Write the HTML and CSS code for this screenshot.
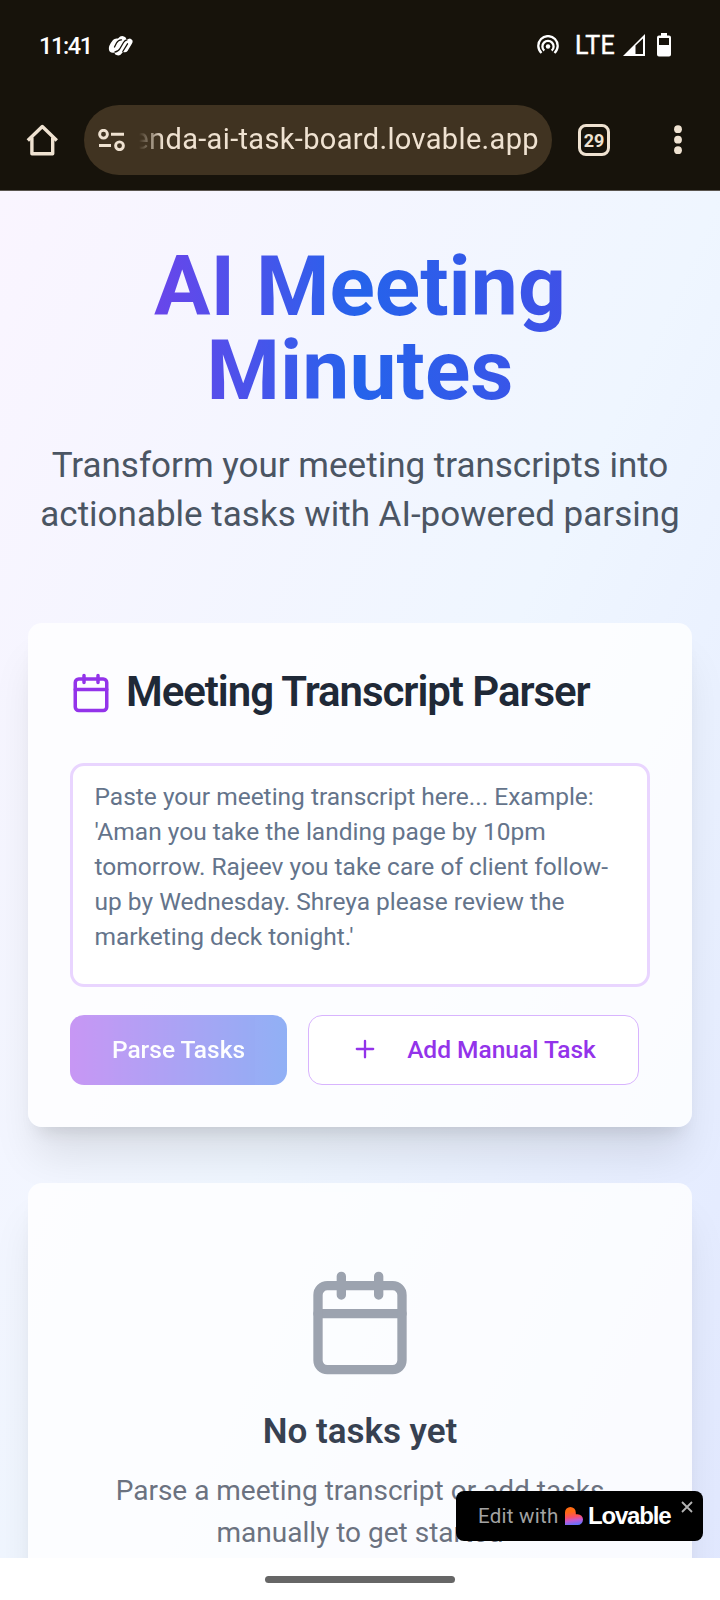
FILE: index.html
```html
<!DOCTYPE html>
<html lang="en">
<head>
<meta charset="utf-8">
<title>AI Meeting Minutes</title>
<link rel="stylesheet" href="styles.css">
</head>
<body>
<div class="phone">
  <header class="chrome">
    <div class="status">
      <span class="clock">11:41</span>
      <svg class="app-mark" width="26" height="22" viewBox="0 0 26 22">
        <path d="M5 5 Q6.500 3 10 3.500 Q13 0 16 1.500 Q18 2 18.500 4.500 L22 3.500 Q26 5 24 8.500 L19.500 16 Q18 18 15 17 Q12 21.500 8.500 20 Q6.500 19.500 6.500 17.500 Q2 18.500 1 15 Q0 11 5 5Z" fill="#fff"/>
        <path d="M13.500 4.800 Q10.500 4.500 8.500 8 L6.500 12 M7 17 Q10.500 16.500 12 13.500 L15.500 7.500 Q17 5 19 4.800 M14.800 16.500 L19.500 8.800" fill="none" stroke="#17130b" stroke-width="1.300" stroke-linecap="round"/>
      </svg>
      <span class="spacer"></span>
      <svg class="hotspot" width="24" height="20" viewBox="0 0 24 20" fill="none" stroke="#fff" stroke-width="2.300">
        <path d="M5.500 18 A9.700 9.700 0 1 1 18.500 18"/>
        <path d="M8.300 15.700 A5.600 5.600 0 1 1 15.700 15.700"/>
        <circle cx="12" cy="11.500" r="2.200" fill="#fff" stroke="none"/>
      </svg>
      <span class="network">LTE</span>
      <svg class="signal" width="22" height="22" viewBox="0 0 22 22">
        <path d="M0 22 L22 0 V22Z" fill="#fff"/><path d="M12.500 11.500 L20 4.500 V20 H12.500Z" fill="#17130b"/>
      </svg>
      <svg class="battery" width="14" height="24" viewBox="0 0 14 24">
        <path d="M4 0 H10 V2.500 H12 Q14 2.500 14 4.500 V21.500 Q14 23.500 12 23.500 H2 Q0 23.500 0 21.500 V4.500 Q0 2.500 2 2.500 H4Z" fill="#fff"/><path d="M2 5 H12 V12 H2Z" fill="#17130b"/>
      </svg>
    </div>
    <div class="toolbar">
      <svg class="home" width="32" height="32" viewBox="0 0 32 32" fill="none" stroke="#efe2d1" stroke-width="3.400" stroke-linejoin="round">
        <path d="M1.800 16.500 L16.300 2.500 L30.800 16.500"/><path d="M5.900 13.500 V29.800 H26.700 V13.500"/>
      </svg>
      <div class="omnibox">
        <svg class="tune" width="27" height="22" viewBox="0 0 27 22" fill="none" stroke="#efe2d1" stroke-width="2.900">
          <circle cx="5.500" cy="5.200" r="3.900"/><path d="M13 5.200 H26 M1 16.500 H13"/><circle cx="21.500" cy="16.800" r="3.900"/>
        </svg>
        <div class="url"><span>enda-ai-task-board.lovable.app</span></div>
      </div>
      <div class="tabs">29</div>
      <svg class="more" width="8" height="30" viewBox="0 0 8 30" fill="#efe2d1"><circle cx="4" cy="4.200" r="3.900"/><circle cx="4" cy="14.700" r="3.900"/><circle cx="4" cy="25.200" r="3.900"/></svg>
    </div>
  </header>

  <div class="viewport">
    <main class="page">
      <div class="hero">
        <h1>AI Meeting<br>Minutes</h1>
        <p>Transform your meeting transcripts into<br>actionable tasks with AI-powered parsing</p>
      </div>

      <section class="card parser">
        <h2>
          <svg width="42" height="42" viewBox="0 0 24 24" fill="none" stroke="currentColor" stroke-width="2" stroke-linecap="round" stroke-linejoin="round"><path d="M8 2v4M16 2v4M3 10h18"/><rect width="18" height="18" x="3" y="4" rx="2"/></svg>
          <span>Meeting Transcript Parser</span>
        </h2>
        <div class="transcript">Paste your meeting transcript here... Example:<br>'Aman you take the landing page by 10pm<br>tomorrow. Rajeev you take care of client follow-<br>up by Wednesday. Shreya please review the<br>marketing deck tonight.'</div>
        <div class="actions">
          <button class="btn primary">Parse Tasks</button>
          <button class="btn outline">
            <svg width="28" height="28" viewBox="0 0 24 24" fill="none" stroke="currentColor" stroke-width="2" stroke-linecap="round"><path d="M5 12h14M12 5v14"/></svg>
            Add Manual Task
          </button>
        </div>
      </section>

      <section class="card empty">
        <svg width="112" height="112" viewBox="0 0 24 24" fill="none" stroke="currentColor" stroke-width="2" stroke-linecap="round" stroke-linejoin="round"><path d="M8 2v4M16 2v4M3 10h18"/><rect width="18" height="18" x="3" y="4" rx="2"/></svg>
        <h3>No tasks yet</h3>
        <p>Parse a meeting transcript or add tasks<br>manually to get started</p>
      </section>
    </main>
    <aside class="badge">
      <span class="edit">Edit with</span>
      <svg class="heart" width="18" height="18" viewBox="0 0 18 18">
        <defs><linearGradient id="heart" x1="0.350" y1="0" x2="0.500" y2="1"><stop offset="0.250" stop-color="#ff6a13"/><stop offset="0.550" stop-color="#fb4f67"/><stop offset="0.750" stop-color="#c15bd4"/><stop offset="1" stop-color="#5f72ff"/></linearGradient></defs>
        <path d="M0 18 V5.400 A5.400 5.400 0 0 1 10.800 5.400 V7.200 H12.600 A5.400 5.400 0 0 1 12.600 18Z" fill="url(#heart)"/>
      </svg>
      <span class="brand">Lovable</span>
      <svg class="close" width="12" height="12" viewBox="0 0 12 12" stroke="#b3b3b3" stroke-width="1.800"><path d="M1 1 L11 11 M11 1 L1 11"/></svg>
    </aside>
  </div>
  <footer class="gesture"><div class="handle"></div></footer>
</div>
</body>
</html>
```

FILE: styles.css
```css
* { box-sizing: border-box; }
body, h1, h2, h3, p { margin: 0; }
body { font-family: Roboto, "Liberation Sans", sans-serif; background: #fff; }
svg { display: block; flex: none; }
.phone { width: 720px; height: 1600px; display: flex; flex-direction: column; overflow: hidden; }

.chrome { height: 191px; flex: none; background: #17130b; border-bottom: 1px solid #5a554f; }
.status { height: 90px; padding: 0 49px 0 39px; display: flex; align-items: center; color: #fff; }
.clock { font-size: 23.5px; font-weight: 500; letter-spacing: -1.4px; width: 69px; white-space: nowrap; line-height: 30px; padding-top: 2px; }
.app-mark { margin-top: 1px; }
.spacer { flex: 1; }
.hotspot { margin-right: 15px; }
.network { font-size: 25px; letter-spacing: 0.2px; font-weight: 400; -webkit-text-stroke: 0.4px #fff; width: 43px; margin-right: 5px; white-space: nowrap; }
.signal { margin-right: 12px; }
.toolbar { height: 100px; display: flex; align-items: center; padding: 0 38px 0 26px; }
.home { margin-right: 26px; }
.omnibox { width: 468px; height: 70px; border-radius: 35px; background: #403321; display: flex; align-items: center; padding-left: 14px; }
.url { width: 400px; margin-left: 14px; overflow: hidden; display: flex; justify-content: flex-end; color: #efe2d1; font-size: 29px; line-height: 40px; white-space: nowrap; -webkit-mask-image: linear-gradient(to right, transparent, #000 24px); mask-image: linear-gradient(to right, transparent, #000 24px); }
.url span { letter-spacing: 0.35px; margin-top: -2px; }
.tabs { width: 32px; height: 32px; margin-left: 26px; margin-right: auto; border: 3px solid #efe2d1; border-radius: 8px; color: #efe2d1; font-size: 18px; font-weight: 700; line-height: 27px; text-align: center; }

.viewport { position: relative; height: 1367px; flex: none; overflow: hidden; }
.page { height: 1504px; padding: 54px 28px 56px; background: linear-gradient(to bottom right, #faf5ff, #eff6ff, #e0e7ff); }
.hero { text-align: center; margin-bottom: 84px; }
h1 { font-size: 84px; line-height: 84px; font-weight: 700; margin-bottom: 28px; color: transparent; background: linear-gradient(to right, #9333ea, #2563eb, #4f46e5); -webkit-background-clip: text; background-clip: text; }
.hero p { font-size: 35px; line-height: 49px; color: #4b5563; white-space: nowrap; }
.card { background: rgb(255 255 255 / 0.8); border-radius: 14px; box-shadow: 0 35px 43.75px -8.75px rgb(0 0 0 / 0.1), 0 14px 17.5px -10.5px rgb(0 0 0 / 0.1); }
.parser { padding: 42px; margin-bottom: 56px; }
h2 { display: flex; align-items: center; gap: 14px; height: 56px; font-size: 42px; line-height: 54px; font-weight: 600; letter-spacing: -0.025em; color: #1f2937; margin-bottom: 42px; white-space: nowrap; }
h2 svg { color: #9333ea; }
h2 span { margin-bottom: 2px; }
.transcript { height: 224px; border: 3px solid #e9d5ff; border-radius: 14px; background: #fff; padding: 12.5px 21.5px; font-size: 24.5px; line-height: 35px; color: #64748b; white-space: nowrap; }
.actions { display: flex; gap: 21px; margin-top: 28px; }
.btn { height: 70px; border-radius: 14px; border: 0; font: 500 24.5px/35px Roboto, sans-serif; white-space: nowrap; display: flex; align-items: center; justify-content: center; padding: 0 0 2px; }
.primary { width: 217px; color: #fff; background: linear-gradient(to right, #9333ea, #2563eb); opacity: 0.5; }
.outline { width: 331px; gap: 28px; color: #9333ea; background: #fff; border: 1px solid #d8b4fe; }
.empty { height: 462px; padding-top: 84px; display: flex; flex-direction: column; align-items: center; text-align: center; color: #9ca3af; }
h3 { margin: 28px 0 14px; font-size: 35px; line-height: 49px; font-weight: 600; color: #374151; }
.empty p { font-size: 28px; line-height: 42px; color: #6b7280; white-space: nowrap; }

/* Floating badge pinned over the page content */
.badge { position: absolute; left: 456px; top: 1300px; width: 247px; height: 50px; border-radius: 8px; background: #000; display: flex; align-items: center; padding-left: 22px; }
.edit { width: 87px; color: #a3a3a3; font-size: 20.5px; letter-spacing: 0.25px; white-space: nowrap; }
.brand { color: #fff; font: 700 24px/30px "Liberation Sans", sans-serif; letter-spacing: -1.2px; margin-left: 5px; width: 84px; white-space: nowrap; }
.close { margin: -19px 0 0 9px; }
.gesture { flex: 1; background: #fff; display: flex; justify-content: center; padding-top: 18px; }
.handle { width: 190px; height: 7px; border-radius: 4px; background: #666; }
```
